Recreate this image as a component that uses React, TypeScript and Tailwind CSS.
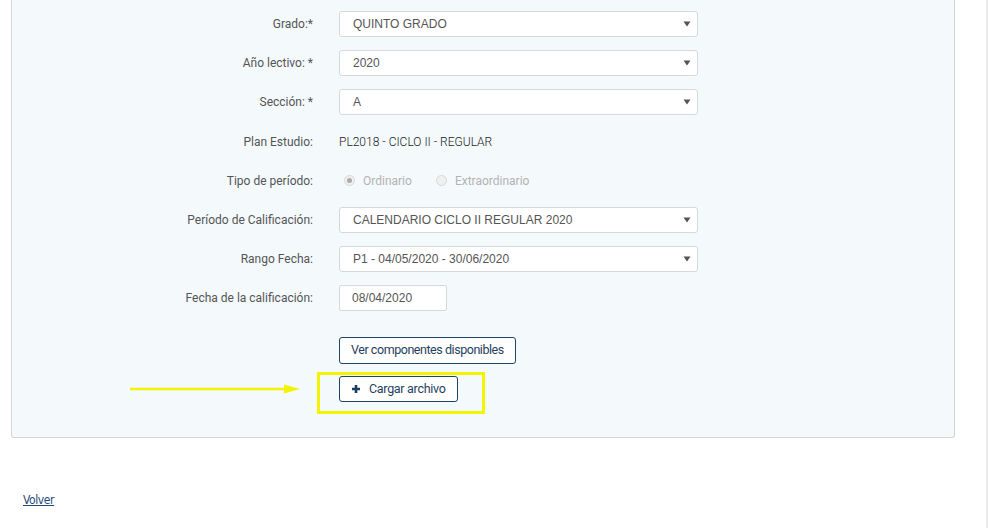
import { ReactNode } from 'react'

// Select-like box with the small dark caret on the right
function SelectBox({ value }: { value: string }) {
  return (
    <div className="flex h-[26px] w-[359px] items-center justify-between rounded-[3px] border border-[#d5d9dc] bg-white pl-[13px] pr-[5px] font-['Liberation_Sans',Arial,sans-serif] text-[12px] text-[#555]">
      <span>{value}</span>
      <svg width="8" height="6" viewBox="0 0 8 6" className="mr-[1px]">
        <path d="M0.5 0.5 L7.5 0.5 L4 5.5 Z" fill="#555" />
      </svg>
    </div>
  )
}

function Row({ label, children }: { label: string; children: ReactNode }) {
  return (
    <div className="flex h-[26px] items-center">
      <div className="w-[302px] pr-[1px] text-right font-['Roboto',sans-serif] text-[12px] text-[#555]">
        {label}
      </div>
      <div className="ml-[25px] flex items-center">{children}</div>
    </div>
  )
}

function Radio({ checked, label }: { checked?: boolean; label: string }) {
  return (
    <label className="flex items-center gap-[8px] font-['Roboto',sans-serif] text-[12px] text-[#b3b3b3]">
      <span className="flex h-[11px] w-[11px] items-center justify-center rounded-full border border-[#d8d8d8] bg-[#f0f0f0]">
        {checked && <span className="h-[5px] w-[5px] rounded-full bg-[#aaa]" />}
      </span>
      {label}
    </label>
  )
}

export default function App() {
  return (
    <div className="relative h-[528px] w-[988px] overflow-hidden bg-white font-['Roboto',sans-serif]">
      {/* thin scrollbar edge on the right */}
      <div className="absolute right-0 top-0 h-full w-[2px] bg-[#ececec]" />

      <div className="ml-[11px] w-[944px] rounded-b-[3px] border border-t-0 border-[#d4d4d4] bg-[#f4f9fc] pb-[35px] pt-[11px]">
        <div className="flex flex-col gap-[13.2px]">
          <Row label="Grado:*">
            <SelectBox value="QUINTO GRADO" />
          </Row>
          <Row label="Año lectivo: *">
            <SelectBox value="2020" />
          </Row>
          <Row label="Sección: *">
            <SelectBox value="A" />
          </Row>
          <Row label="Plan Estudio:">
            <span className="text-[12px] font-light text-[#222]">PL2018 - CICLO II - REGULAR</span>
          </Row>
          <Row label="Tipo de período:">
            <div className="ml-[5px] flex items-center gap-[24px]">
              <Radio checked label="Ordinario" />
              <Radio label="Extraordinario" />
            </div>
          </Row>
          <Row label="Período de Calificación:">
            <SelectBox value="CALENDARIO CICLO II REGULAR 2020" />
          </Row>
          <Row label="Rango Fecha:">
            <SelectBox value="P1 - 04/05/2020 - 30/06/2020" />
          </Row>
          <Row label="Fecha de la calificación:">
            <div className="flex h-[26px] w-[108px] items-center rounded-[2px] border border-[#d5d9dc] bg-white pl-[12px] font-['Liberation_Sans',Arial,sans-serif] text-[12px] text-[#555]">
              08/04/2020
            </div>
          </Row>
        </div>

        <div className="ml-[327px] mt-[26px] flex flex-col items-start gap-[12px]">
          <button className="h-[27px] rounded-[3px] border border-[#1f4466] bg-white px-[11px] font-['Roboto',sans-serif] text-[12.5px] tracking-[-0.45px] text-[#1f3f5e]">
            Ver componentes disponibles
          </button>

          <div className="relative">
            {/* highlight box and pointer arrow */}
            <div className="pointer-events-none absolute left-[-22px] top-[-4px] h-[42px] w-[168px] border-[3px] border-[#f4f400]" />
            <svg
              className="pointer-events-none absolute left-[-209px] top-[7px]"
              width="172"
              height="12"
              viewBox="0 0 172 12"
            >
              <line x1="0" y1="6" x2="156" y2="6" stroke="#f4f400" strokeWidth="2.5" />
              <path d="M154 1.5 L170 6 L154 10.5 Z" fill="#f4f400" />
            </svg>

            <button className="flex h-[26px] items-center gap-[9px] rounded-[3px] border border-[#1f4466] bg-white pl-[12px] pr-[11px] font-['Roboto',sans-serif] text-[12.5px] tracking-[-0.3px] text-[#1f3f5e]">
              <svg width="8" height="8" viewBox="0 0 8 8">
                <path d="M2.7 0 H5.3 V2.7 H8 V5.3 H5.3 V8 H2.7 V5.3 H0 V2.7 H2.7 Z" fill="#1f3f5e" />
              </svg>
              Cargar archivo
            </button>
          </div>
        </div>
      </div>

      <div className="ml-[23px] mt-[49px]">
        <a
          href="#"
          className="font-['DejaVu_Sans_Condensed','DejaVu_Sans',sans-serif] text-[12px] tracking-[-0.4px] text-[#1f4a75] underline"
        >
          Volver
        </a>
      </div>
    </div>
  )
}
